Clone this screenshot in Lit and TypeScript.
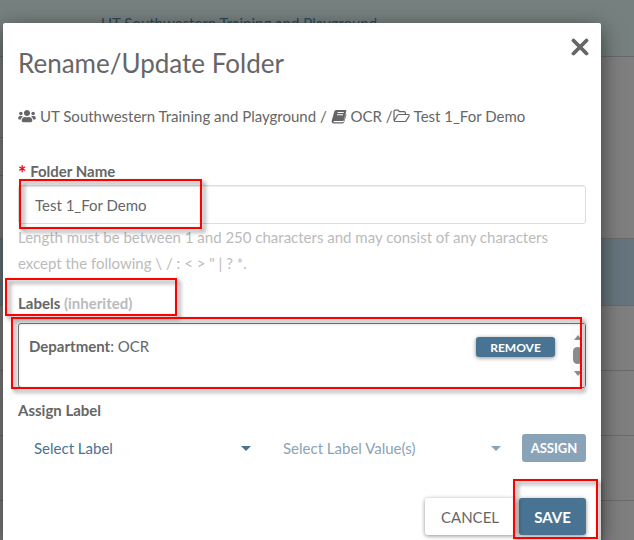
import { LitElement, html, css } from "lit";
import { customElement, state } from "lit/decorators.js";

@customElement("folder-dialog")
export class FolderDialog extends LitElement {
  @state() private folderName = "Test 1_For Demo";

  static styles = css`
    :host {
      display: block;
      color: #666;
      font: 15px/26px "Lato", "Liberation Sans", sans-serif;
    }
    * { box-sizing: border-box; }
    .dialog {
      background: #fff;
      border-radius: 2px 2px 0 0;
      box-shadow: 0 6px 22px rgba(0, 0, 0, 0.55);
      padding: 24px 15px 5px;
      min-height: calc(100vh - 23px);
    }
    .head { display: flex; justify-content: space-between; align-items: flex-start; height: 56px; }
    h1 { margin: 0; font-size: 26px; line-height: 32px; font-weight: 400; }
    .close {
      border: 0; background: none; padding: 0; margin: -10px -4px 0 0;
      width: 20px; height: 20px; color: #666; display: grid; place-items: center;
    }
    svg { display: block; fill: currentColor; }
    .crumbs { display: flex; align-items: center; margin-bottom: 30px; white-space: pre; }
    .crumbs svg { margin-right: 4px; }
    .label { display: block; font-weight: 700; line-height: 24px; }
    .star { color: #f00; font-size: 20px; line-height: 10px; vertical-align: -4px; }
    .wrap { position: relative; }
    .text {
      display: block; width: 100%; height: 39px; padding: 0 16px;
      border: 1px solid #ddd; border-radius: 3px; color: inherit; font: inherit; background: #fff;
      box-shadow: inset 0 1px 1px rgba(0, 0, 0, 0.06);
    }
    .name-label { padding-bottom: 2px; }
    .help { margin: 0 0 15px; color: #bbb; }
    .muted { color: #bbb; }
    .list {
      display: flex; height: 65px; margin-top: 8px;
      border: 1px solid #777; border-radius: 3px;
    }
    .entry { flex: 1; display: flex; justify-content: space-between; align-items: flex-start; padding: 9px 15px 0 10px; }
    .bar { width: 15px; display: flex; flex-direction: column; align-items: center; gap: 7px; padding: 11px 0; background: #fcfcfc; color: #8b8b8b; }
    .thumb { width: 9px; height: 17px; border-radius: 5px; background: #8b8b8b; }
    button { font-family: inherit; text-transform: uppercase; }
    .btn {
      border: 0; border-radius: 3px; color: #fff; background: #487393;
      box-shadow: 0 1px 4px rgba(0, 0, 0, 0.45); padding: 0;
    }
    .small { width: 79px; height: 20px; font-size: 12px; font-weight: 700; margin-top: 4px; }
    .assign { width: 64px; height: 28px; font-size: 13px; font-weight: 700; background: #89a3b8; box-shadow: none; }
    .large { height: 37px; font-size: 15px; }
    .cancel { width: 90px; background: #fff; color: #666; }
    .save { width: 67px; font-weight: 700; }
    .assign-block { padding-top: 10px; }
    .assign-row { display: grid; grid-template-columns: 249px 1fr 64px; align-items: center; margin-top: 12px; }
    .pick { display: flex; align-items: center; color: #487393; }
    .pick select {
      flex: 1; appearance: none; border: 0; background: none; color: inherit; font: inherit;
      opacity: 1; height: 28px; padding: 0 0 0 16px;
    }
    .pick svg { margin-right: 16px; }
    .off { color: #89a3b8; }
    .off svg { margin-right: 21px; }
    .foot { display: flex; justify-content: flex-end; gap: 4px; margin-top: 36px; }
    .mark {
      position: absolute; border: 2px solid #f00; pointer-events: none;
      filter: drop-shadow(3px 3px 2px rgba(0, 0, 0, 0.5));
    }
    .mark-name { left: 1px; top: -6px; width: 183px; height: 50px; }
    .mark-title { left: -13px; top: -13px; width: 172px; height: 38px; }
    .mark-list { left: -7px; right: 4px; top: -6px; height: 72px; }
    .mark-save { left: -6px; right: -12px; top: -19px; bottom: -4px; }
  `;

  private arrow(up = false, w = 10) {
    return html`<svg width=${w} height="5" viewBox="0 0 10 5" preserveAspectRatio="none" aria-hidden="true">
      <path d=${up ? "M0 5 5 0l5 5z" : "M0 0h10L5 5z"} /></svg>`;
  }

  render() {
    return html`
      <section class="dialog" role="dialog" aria-labelledby="title">
        <header class="head">
          <h1 id="title">Rename/Update Folder</h1>
          <button class="close" aria-label="Close">
            <svg width="18" height="18" viewBox="0 0 18 18">
              <path d="M2.5 2.5l13 13M15.5 2.5l-13 13" stroke="currentColor" stroke-width="3.8" stroke-linecap="round" />
            </svg>
          </button>
        </header>
        <nav class="crumbs" aria-label="Location">
          <svg width="18" height="14" viewBox="0 0 640 512">
            <path d="M96 224c35.3 0 64-28.7 64-64s-28.7-64-64-64-64 28.7-64 64 28.7 64 64 64zm448 0c35.3 0 64-28.7 64-64s-28.7-64-64-64-64 28.7-64 64 28.7 64 64 64zm32 32h-64c-17.6 0-33.5 7.1-45.1 18.6 40.3 22.1 68.9 62 75.1 109.4h66c17.7 0 32-14.3 32-32v-32c0-35.3-28.7-64-64-64zm-256 0c61.9 0 112-50.1 112-112S381.9 32 320 32 208 82.1 208 144s50.1 112 112 112zm76.8 32h-8.3c-20.8 10-43.9 16-68.5 16s-47.6-6-68.5-16h-8.3C179.6 288 128 339.6 128 403.2V432c0 26.5 21.5 48 48 48h288c26.5 0 48-21.5 48-48v-28.8c0-63.6-51.6-115.2-115.2-115.2zm-223.7-13.4C161.5 263.1 145.6 256 128 256H64c-35.3 0-64 28.7-64 64v32c0 17.7 14.3 32 32 32h65.9c6.3-47.4 34.9-87.3 75.2-109.4z" />
          </svg><span>UT Southwestern Training and Playground / </span>
          <svg width="16" height="15" viewBox="0 0 15 15">
            <path fill-rule="evenodd" d="M4.6 1h9.2q1.3 0 1 1.2l-2.5 9q-.3.9-1.3.9H3q-1 0-1 .6t1 .6h9l2.4-8.4.4.2q.3.5.1 1l-2.3 7.1q-.4 1.3-1.6 1.3H2.500q-2.700-.2-2.300-2.700L2.800 2.500Q3.300 1 4.600 1zM6 4h6l.3-1H6.300zM5.400 6.200h6l.3-1h-6z" />
          </svg><span>OCR /</span>
          <svg width="17" height="14" viewBox="0 0 17 14">
            <path d="M1 11V2.500Q1 1.200 2.300 1.200h2.600Q6 1.200 6 2.600h5Q12.400 2.600 12.400 4v1.500M1 11V2.500M1.200 12l3.200-5.700q.5-.8 1.400-.8h9.400q1.500.2.8 1.500l-2.700 4.600q-.5.900-1.400.900H2.400Q1 12.500 1 11" fill="none" stroke="currentColor" stroke-width="1.200" stroke-linejoin="round" />
          </svg><span>Test 1_For Demo</span>
        </nav>

        <label class="label name-label" for="name"><span class="star">*</span> Folder Name</label>
        <div class="wrap">
          <input class="text" id="name" .value=${this.folderName}
            @input=${(e: Event) => (this.folderName = (e.target as HTMLInputElement).value)} />
          <div class="mark mark-name"></div>
        </div>
        <p class="help">Length must be between 1 and 250 characters and may consist of any characters except the following \\ / : &lt; &gt; " | ? *.</p>

        <div class="wrap">
          <span class="label">Labels <span class="muted">(inherited)</span></span>
          <div class="mark mark-title"></div>
        </div>
        <div class="wrap">
          <div class="list">
            <div class="entry">
              <span><b>Department</b>: OCR</span>
              <button class="btn small">Remove</button>
            </div>
            <div class="bar">${this.arrow(true, 8)}<div class="thumb"></div>${this.arrow(false, 8)}</div>
          </div>
          <div class="mark mark-list"></div>
        </div>

        <div class="assign-block">
          <label class="label" for="label">Assign Label</label>
          <div class="assign-row">
            <div class="pick">
              <select id="label"><option>Select Label</option></select>${this.arrow()}
            </div>
            <div class="pick off">
              <select aria-label="Label values" disabled><option>Select Label Value(s)</option></select>${this.arrow()}
            </div>
            <button class="btn assign" disabled>Assign</button>
          </div>
        </div>

        <footer class="foot">
          <button class="btn large cancel">Cancel</button>
          <div class="wrap">
            <button class="btn large save">Save</button>
            <div class="mark mark-save"></div>
          </div>
        </footer>
      </section>
    `;
  }
}

@customElement("app-root")
export class AppRoot extends LitElement {
  static styles = css`
    :host { display: grid; height: 100vh; overflow: hidden; font-family: "Lato", "Liberation Sans", sans-serif; }
    .page, .layer { grid-area: 1 / 1; min-width: 0; }
    .page { background: #7f7f7f; }
    .page div { box-sizing: border-box; }
    .band { height: 57px; background: #76807e; border-bottom: 1px solid #696969; padding: 11px 0 0 101px; color: #2f4658; font-size: 15px; line-height: 24px; }
    .row { height: 65px; border-bottom: 1px solid #6b6b6b; }
    .page .first { height: 182px; }
    .page .chosen { height: 67px; background: #66757d; }
    .side { width: 50%; border-bottom: 1px solid #6b6b6b; }
    .tree { height: 81px; }
    .branch { height: 38px; }
    .layer { padding: 23px 33px 0 3px; }
  `;

  render() {
    return html`
      <div class="page">
        <div class="band">UT Southwestern Training and Playground</div>
        <div class="row first">
          <div class="side tree"></div>
          <div class="side branch"></div>
        </div>
        <div class="row chosen"></div>
        <div class="row"></div>
        <div class="row"></div>
        <div class="row"></div>
      </div>
      <div class="layer"><folder-dialog></folder-dialog></div>
    `;
  }
}
